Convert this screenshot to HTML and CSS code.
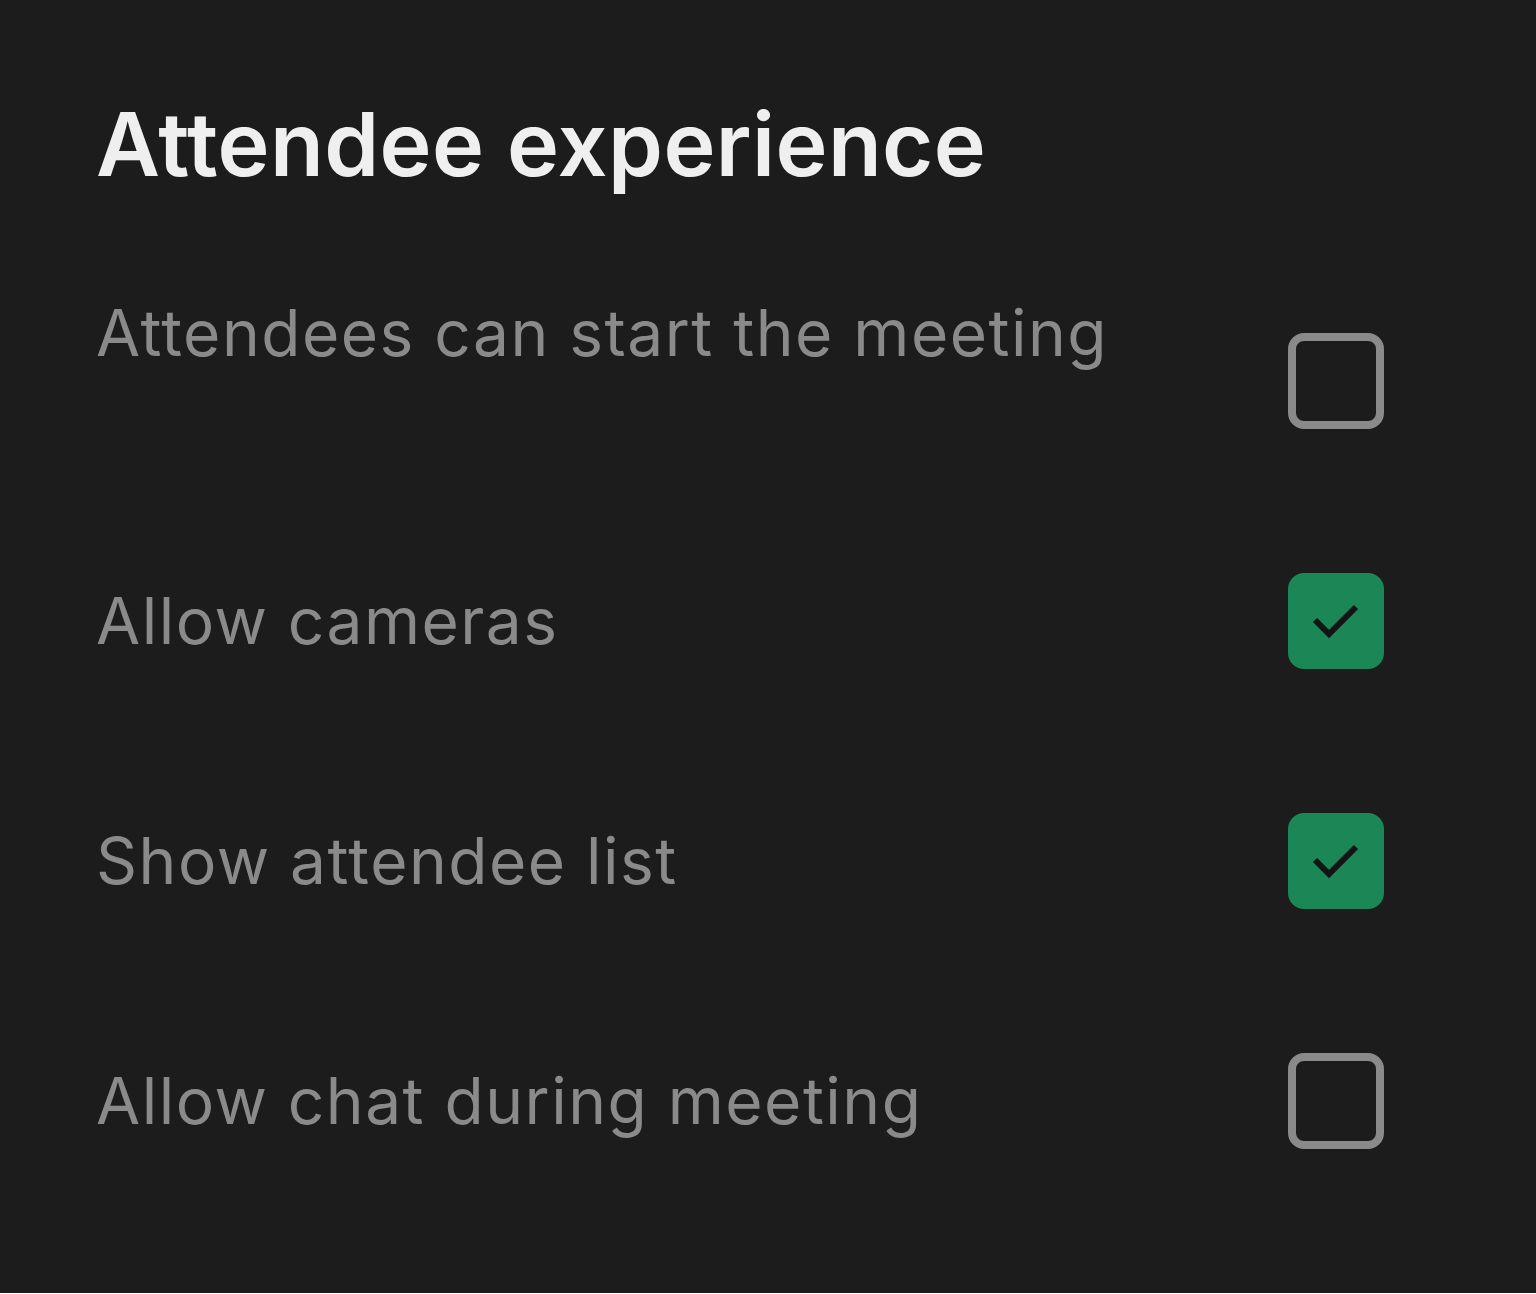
FILE: index.html
```html
<!DOCTYPE html>
<html lang="en">
   <head>
      <meta charset="UTF-8">
      <meta name="viewport" content="width=device-width, initial-scale=1.0">
      <title>Attendee experience</title>
      <link rel="stylesheet" href="styles.css">
   </head>
   <body>
      <section class="panel">
         <h1 class="panel-title">Attendee experience</h1>
         <ul class="options">
            <li class="option option-top">
               <span class="option-label">Attendees can start the meeting</span>
               <span class="box"></span>
            </li>
            <li class="option">
               <span class="option-label">Allow cameras</span>
               <span class="box box-on">
                  <svg viewBox="0 0 96 96" width="96" height="96"><path d="M27 47 L41 61 L68 34" fill="none" stroke="#141414" stroke-width="6"/></svg>
               </span>
            </li>
            <li class="option">
               <span class="option-label">Show attendee list</span>
               <span class="box box-on">
                  <svg viewBox="0 0 96 96" width="96" height="96"><path d="M27 47 L41 61 L68 34" fill="none" stroke="#141414" stroke-width="6"/></svg>
               </span>
            </li>
            <li class="option">
               <span class="option-label">Allow chat during meeting</span>
               <span class="box"></span>
            </li>
         </ul>
      </section>
   </body>
</html>
```

FILE: styles.css
```css
body {
margin: 0;
background: #ffffff;
font-family: Inter, "Noto Sans", sans-serif;
}
.panel {
box-sizing: border-box;
height: 1293px;
background: #1c1c1c;
padding: 91px 152px 0 96px;
}
.panel-title {
margin: 0;
font-size: 88px;
line-height: 106px;
font-weight: 600;
letter-spacing: 0.4px;
color: #efefef;
}
.options {
list-style: none;
margin: 88px 0 0;
padding: 0;
display: flex;
flex-direction: column;
gap: 144px;
}
.option {
display: flex;
align-items: center;
justify-content: space-between;
}
.option-top {
align-items: flex-start;
}
.option-top .box {
margin-top: 48px;
}
.option-label {
font-size: 64px;
line-height: 96px;
letter-spacing: 1.5px;
color: #8a8a8a;
}
.box {
box-sizing: border-box;
width: 96px;
height: 96px;
border: 8px solid #8a8a8a;
border-radius: 16px;
flex-shrink: 0;
}
.box-on {
border: none;
background: #1c8756;
}
.box svg {
display: block;
}
```
